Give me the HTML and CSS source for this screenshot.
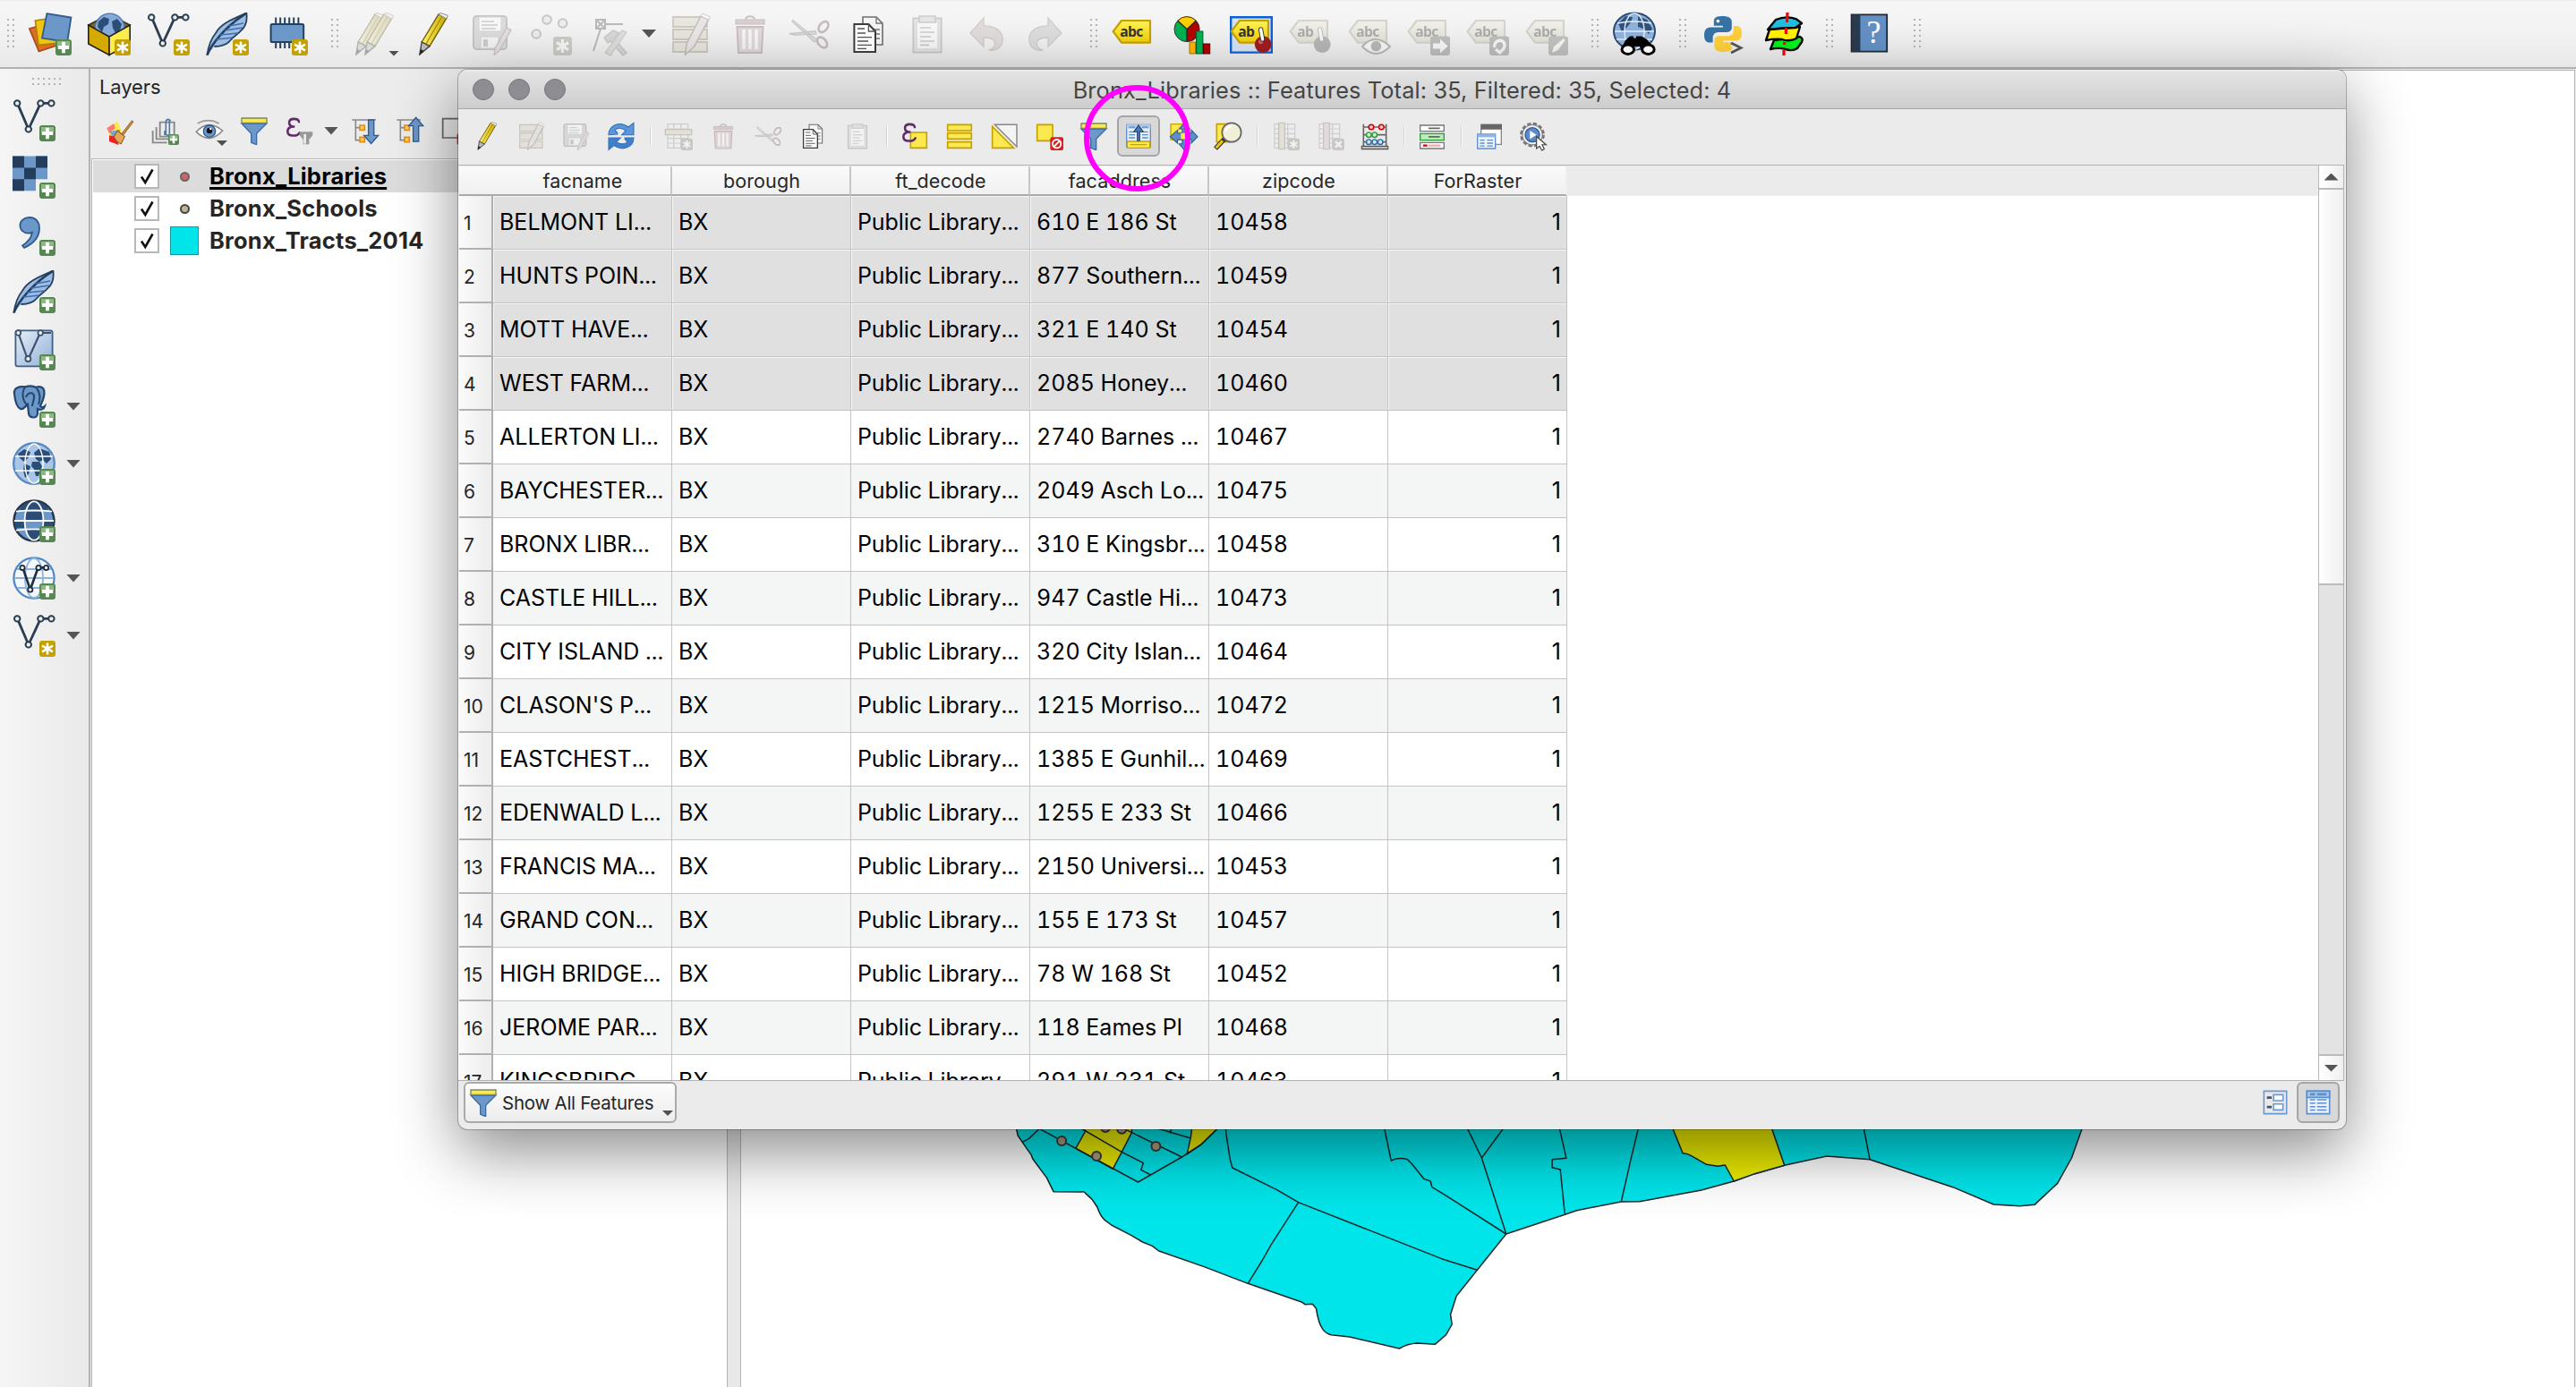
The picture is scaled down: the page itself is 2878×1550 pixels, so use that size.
FILE: index.html
```html
<!DOCTYPE html>
<html lang="en">
<head>
<meta charset="utf-8">
<title>Bronx_Libraries :: Features Total: 35, Filtered: 35, Selected: 4</title>
<link rel="stylesheet" href="styles.css">
</head>
<body>
<svg class="defs" width="0" height="0" aria-hidden="true">
<defs>
<linearGradient id="pen" x1="0" x2="1"><stop offset="0" stop-color="#fff36b"/><stop offset="1" stop-color="#c9a800"/></linearGradient>
<linearGradient id="blueg" x1="0" y1="0" x2="1" y2="1"><stop offset="0" stop-color="#e8eef6"/><stop offset="1" stop-color="#8fb0d8"/></linearGradient>
<linearGradient id="tag" x1="0" y1="0" x2="0" y2="1"><stop offset="0" stop-color="#fff35a"/><stop offset="1" stop-color="#f0cf00"/></linearGradient>
<symbol id="plus" viewBox="0 0 24 24"><rect x="15" y="15" width="9" height="9" rx="1.5" fill="#56894f"/><path d="M16 16h7v3.2h-7z" fill="#8fb78a"/><path d="M19.5 16.4v6.2M16.4 19.5h6.2" stroke="#fff" stroke-width="1.9"/></symbol>
<symbol id="star" viewBox="0 0 24 24"><rect x="15" y="15" width="9" height="9" rx="1.5" fill="#c4a000"/><path d="M19.5 16.2v6.6M16.5 17.8l6 3.4M22.5 17.8l-6 3.4" stroke="#fff" stroke-width="1.3"/></symbol>
<symbol id="vec" viewBox="0 0 24 24"><path d="M3.2 3.8 8.4 16M9.5 16 15.1 3.9M17 2.7h3.4" stroke="#2b3d50" stroke-width="1.4" fill="none"/><g fill="#eef0ea" stroke="#2b3d50"><circle cx="2.6" cy="2.7" r="1.6"/><circle cx="15.7" cy="2.7" r="1.6"/><circle cx="21.7" cy="2.7" r="1.6"/><circle cx="8.9" cy="17.2" r="1.6"/></g></symbol>
<symbol id="feather" viewBox="0 0 24 24"><path d="M.7 23.8C1.5 18 3 14.500 5.500 11.500 8 6.500 14 4 22.700.3c.6 5-.6 7.700-3 9.700-2 2.500-4.500 3.500-6 5.500-1.500 2-5 3.500-9 3.500" fill="#9dbde6" stroke="#24405f" stroke-width=".9"/><path d="M.7 23.800C3 18 11 7.500 22.700.300" stroke="#24405f" stroke-width="1.300" fill="none"/><path d="M8 12.500l10-1M6 15l9-1M10.500 10l10-1.500M13 7.500l8-1.500" stroke="#3f6ea8" stroke-width=".7"/></symbol>
<symbol id="pencil" viewBox="0 0 24 24"><path d="M3.600 16.500 13 1l4.500 2L8 18.800z" fill="url(#pen)" stroke="#6d5d10" stroke-width=".7"/><path d="M6 17.500 15 2" stroke="#a68a00" stroke-width=".6"/><path d="M3.600 16.500 2.400 23.500 8 18.800z" fill="#b9b9b9" stroke="#444" stroke-width=".7"/><path d="m2.400 23.500.6-3 1.800 1z" fill="#222"/><path d="m13 1 1-.8 4.200 1.500-.7 1.800z" fill="#f3f3f3" stroke="#888" stroke-width=".5"/></symbol>
<symbol id="save" viewBox="0 0 24 24"><rect x="1.500" y="2" width="18.500" height="18.500" rx="1.800" fill="#b0b4b8" stroke="#777" stroke-width="1"/><path d="M4.500 2.500h12.500v8h-12.500z" fill="#fff" stroke="#999" stroke-width=".5"/><path d="M6 5h7M6 7h9M6 9h8" stroke="#888" stroke-width=".7"/><path d="M5.500 13.500h10v6.500h-10z" fill="#f5f5f5" stroke="#999" stroke-width=".5"/><path d="M7 15h2.500v4H7z" fill="#888"/><path d="M13.500 20 20 8.500l2.500 1.300-6.500 11.500-3 2.500z" fill="#d9b9b0" stroke="#867" stroke-width=".6"/></symbol>
<symbol id="rows" viewBox="0 0 24 24"><g fill="#d9cf9c" stroke="#8d8350" stroke-width=".9"><path d="M2 2.500h19v5.500H2zM2 9.500h19v5.500H2zM2 16.500h19v5.500H2z"/></g><path d="M9.500 17.500 17.500 2l4.300 2-8 15-5 4.500z" fill="#e2cdc6" stroke="#766" stroke-width=".8"/><path d="m17.500 2 1-1.500 4.300 2-1 1.500z" fill="#fff" stroke="#888" stroke-width=".5"/></symbol>
<symbol id="trash" viewBox="0 0 24 24"><path d="M4.700 8h14.600l-.8 14.500h-13z" fill="#d9a5aa" stroke="#a35a62" stroke-width=".9"/><path d="M4 4h16v2.500H4z" fill="#c98a90" stroke="#a35a62" stroke-width=".6"/><path d="M9.500 3.800c.5-2.200 4.500-2.200 5 0" fill="none" stroke="#a35a62"/><path d="M8.500 9.500v11M12 9.500v11M15.500 9.500v11" stroke="#fff" stroke-width="1.700"/></symbol>
<symbol id="cut" viewBox="0 0 24 24"><path d="M1 11.800 15.500 10.300 16 12 4 12.600zM3 4.300 16.500 15.500 15 16.500 2.500 5z" fill="#bbb" stroke="#777" stroke-width=".6"/><ellipse cx="20" cy="8" rx="3.400" ry="2.200" transform="rotate(-50 20 8)" fill="none" stroke="#8a5a5a" stroke-width="1.300"/><ellipse cx="19.300" cy="16.700" rx="3.400" ry="2.200" transform="rotate(50 19.300 16.700)" fill="none" stroke="#8a5a5a" stroke-width="1.300"/></symbol>
<symbol id="copy" viewBox="0 0 24 24"><path d="M9 2.500h7.500L20 6v12H9z" fill="#f4f4f4" stroke="#6e6e6e" stroke-width=".8"/><path d="M16.500 2.500V6H20M15.500 9.500h3M15.500 12h3M15.500 14.500h3" fill="none" stroke="#777" stroke-width=".7"/><path d="M4.200 6.500h8l3.800 4V22H4.200z" fill="#fff" stroke="#3c3c3c" stroke-width="1"/><path d="M12.200 6.500v4H16M6 9h4M6 11.500h4.500M6 13.800h8M6 16h6M6 18.200h8M6 20.200h5" fill="none" stroke="#555" stroke-width=".7"/></symbol>
<symbol id="paste" viewBox="0 0 24 24"><path d="M4.200 3.300h15.600v19H4.200z" fill="#d8d5ca" stroke="#8b8470"/><path d="M6 5h12v15.500H6z" fill="#fff" stroke="#999" stroke-width=".5"/><path d="M7.500 2h9v3.500h-9z" fill="#ccc" stroke="#888" stroke-width=".8"/><path d="M8 8.500h6M8 11h8M8 13.500h6M8 16h8M8 18.200h5" stroke="#888" stroke-width=".8"/></symbol>
<symbol id="undo" viewBox="0 0 24 24"><path d="M3 11.500 10.500 3v4.500c8 0 11 4 10.500 8.500-.5 4-4 5.500-7.500 5 3-1 4-3 3-5-.8-1.500-3-2-6-2v5z" fill="#c9b3a8" stroke="#a98a7c" stroke-width=".7"/></symbol>
<symbol id="funnel" viewBox="0 0 24 24"><path d="M1.500 6 9.500 14.500v7.500l4.500 1.800V14.500L22.500 6z" fill="#6b97c9" stroke="#3a6ba5" stroke-width="1"/><path d="M1.500 1.500h21v4h-21z" fill="#fce94f" stroke="#7a8a50" stroke-width="1"/></symbol>
<symbol id="eps" viewBox="0 0 24 24"><path d="M12 4.600C11.500 1.500 4 1 3.800 5.200 3.800 8 6 8.700 8.500 8.700 4.500 8.500 2.300 10 2.500 13c.3 4 8 4.200 10 .7" fill="none" stroke="#5e2d68" stroke-width="1.900" stroke-linecap="round"/></symbol>
<symbol id="tagabc" viewBox="0 0 24 24"><path d="M.8 10.600 5.500 4.500h16v12.300h-16z" fill="url(#tag)" stroke="#c4a000" stroke-width="1.100" stroke-linejoin="round"/></symbol>
<symbol id="sheet" viewBox="0 0 24 24"><path d="M3 2h17v20H3z" fill="#eef2f7" stroke="#999" stroke-width=".9"/><path d="M3 6h17M8 2v20M14 2v20M3 10h17M3 14h17M3 18h17" stroke="#999" stroke-width=".9"/></symbol>
<symbol id="globe" viewBox="0 0 24 24"><circle cx="12" cy="12" r="11.400" fill="#a9c6e8" stroke="#5a8ac2" stroke-width="1.200"/><path d="M3 6.500 6.500 4 10 5.500 9 8.500 6.500 11 4 9zM6.500 12l3.500 1.500L9 18l-2 2-1-4zM12 6l3-2.500 5.500 2 1 4-2.500 2.500-2-2-2 1-2-1.500zM11 11h4l1.500 2.500-2 5.500H13l-1-4-1.500-1.500z" fill="#2c4d75"/><ellipse cx="12" cy="12" rx="5" ry="11" fill="none" stroke="#fff" stroke-width=".7"/><path d="M1.500 8h21M1.500 16h21" stroke="#fff" stroke-width=".7"/></symbol>
</defs>
</svg>

<header class="main-toolbar">
  <div class="group first">
    <i class="grip"></i>
    <svg class="icon" viewBox="0 0 24 24"><path d="M.4 9 11 6l4.500 12.500-9.800 3.200z" fill="#dd6c2a" stroke="#a54a15" stroke-width=".8"/><path d="M3.700 4.500 14 3l3 14-11.500 1.200z" fill="#f2c40f" stroke="#a98200" stroke-width=".8"/><path d="M10.200.600 23.700 2.800 21.600 16.500 7.500 14.300z" fill="#6b97c9" stroke="#2f5a8c" stroke-width=".9"/><use href="#plus"/></svg>
    <svg class="icon" viewBox="0 0 24 24"><path d="M.4 7 12 1l11.600 6L12 14z" fill="#7a6a10" stroke="#333" stroke-width=".8"/><circle cx="12.300" cy="8.800" r="8.200" fill="#86abdb" stroke="#4a77ad" stroke-width=".6"/><path d="M6 5l3-2.500 3 1-.5 3-2.500 1.500L8 11 5.500 8zM13.500 5l3-1.500 2.500 3-1 3.500-2.500 1.500-1.500-3z" fill="#2c4d75"/><path d="M.4 7v10.500L12 23.700V13.500z" fill="#d4aa00" stroke="#222" stroke-width=".8"/><path d="M23.600 7v10.500L12 23.700V13.500z" fill="#fcee4f" stroke="#222" stroke-width=".8"/><use href="#star"/></svg>
    <svg class="icon" viewBox="0 0 24 24"><use href="#vec"/><use href="#star"/></svg>
    <svg class="icon" viewBox="0 0 24 24"><use href="#feather"/><use href="#star"/></svg>
    <svg class="icon" viewBox="0 0 24 24"><path d="M6.100 2.700v17.300M8.600 2.700v17.300M11.100 2.700v17.300M13.600 2.700v17.300M16.100 2.700v17.300M18.700 2.700v17.300" stroke="#24405f" stroke-width="1"/><rect x="3.300" y="6.500" width="18.300" height="10" rx=".8" fill="#6b97c9" stroke="#24405f"/><use href="#star"/></svg>
  </div>
  <div class="group edit">
    <i class="grip"></i>
    <span class="tool"><svg class="icon off" viewBox="0 0 24 24"><use href="#pencil" x="-.5"/><use href="#pencil" x="4.500"/></svg><i class="tiny-arrow"></i></span>
    <svg class="icon" viewBox="0 0 24 24"><use href="#pencil" x="2"/></svg>
    <svg class="icon off" viewBox="0 0 24 24"><use href="#save"/></svg>
    <svg class="icon off" viewBox="0 0 24 24"><g fill="#dfe5dc" stroke="#777"><circle cx="9.500" cy="4" r="2.400"/><circle cx="18.300" cy="6" r="2.400"/><circle cx="3.600" cy="12" r="2.400"/></g><rect x="13" y="13.500" width="10.500" height="10.500" rx="1.500" fill="#8f8a6c"/><path d="M18.200 15v7.500M15 16.800l6.500 4M21.500 16.800l-6.500 4" stroke="#fff" stroke-width="1.500"/></svg>
    <svg class="icon off" viewBox="0 0 24 24"><path d="M4 4h5v5H4zM4 4l5 5M9 4 4 9M9 6.500h10M6.500 9 2.500 21.500" fill="none" stroke="#555"/><path d="M8.500 14l5-4 3.500 1.500-3 3 7 8-2 1.500-7-8-1.500 1z" fill="#aaa" stroke="#777" stroke-width=".6"/><path d="M21 11l-9 13-3-1.500L18.500 10z" fill="#c2bda8" stroke="#888" stroke-width=".6"/></svg>
    <i class="arrow"></i>
    <svg class="icon off" viewBox="0 0 24 24"><use href="#rows"/></svg>
    <svg class="icon off" viewBox="0 0 24 24"><use href="#trash"/></svg>
    <svg class="icon off" viewBox="0 0 24 24"><use href="#cut"/></svg>
    <svg class="icon" viewBox="0 0 24 24"><use href="#copy"/></svg>
    <svg class="icon off" viewBox="0 0 24 24"><use href="#paste"/></svg>
    <svg class="icon off" viewBox="0 0 24 24"><use href="#undo"/></svg>
    <svg class="icon off flip" viewBox="0 0 24 24"><use href="#undo"/></svg>
  </div>
  <div class="group labels">
    <i class="grip"></i>
    <svg class="icon" viewBox="0 0 24 24"><use href="#tagabc"/><text class="tag-text" x="4.600" y="13.400">abc</text></svg>
    <svg class="icon" viewBox="0 0 24 24"><circle cx="9" cy="9.300" r="7" fill="#00b050"/><path d="M9 9.300 3.800 4.500A7 7 0 0 1 14.200 4.500z" fill="#ffcc00"/><path d="M9 9.300 14.200 4.500A7 7 0 0 1 9 16.300z" fill="#b30000"/><path d="M9 16.300V9.300L3.800 4.500M9 9.300l5.200-4.800" stroke="#222" stroke-width=".6" fill="none"/><circle cx="9" cy="9.300" r="7" fill="none" stroke="#333" stroke-width=".5"/><path d="M10.500 16.500h3.300V23h-3.300z" fill="#ffb400" stroke="#a70" stroke-width=".5"/><path d="M14.300 10.500h3.600V23h-3.600z" fill="#00b050" stroke="#063" stroke-width=".6"/><path d="M18.300 17.500h3.500V23h-3.500z" fill="#b30000" stroke="#500" stroke-width=".6"/></svg>
    <svg class="icon" viewBox="0 0 24 24"><path d="M.6 2.600h22.800v19.700H.6z" fill="#d5e2f3" stroke="#0b61d8" stroke-width="1.200"/><use href="#tagabc"/><text class="tag-text" x="4.600" y="13.400">ab</text><circle cx="18.600" cy="17.800" r="4.700" fill="#9f1d1d"/><circle cx="17.300" cy="16.300" r="1.300" fill="#d06060"/><path d="M17.300 9.500l1 5.500" stroke="#333" stroke-width="2.600" stroke-linecap="round"/><path d="M17.300 9.500l1 5.500" stroke="#fff" stroke-width="1.700" stroke-linecap="round"/></svg>
    <svg class="icon off gray" viewBox="0 0 24 24"><use href="#tagabc"/><text class="tag-text" x="4.600" y="13.400">ab</text><circle cx="18.600" cy="17.800" r="4.700" fill="#744"/><path d="M17.300 9.500l1 5.500" stroke="#555" stroke-width="2.600" stroke-linecap="round"/><path d="M17.300 9.500l1 5.500" stroke="#fff" stroke-width="1.700" stroke-linecap="round"/></svg>
    <svg class="icon off gray" viewBox="0 0 24 24"><use href="#tagabc"/><text class="tag-text" x="4.600" y="13.400">abc</text><path d="M8 19q7-8 15.500 0-8 8-15.500 0z" fill="#fff" stroke="#555"/><circle cx="15.700" cy="18.800" r="2.900" fill="#555"/></svg>
    <svg class="icon off gray" viewBox="0 0 24 24"><use href="#tagabc"/><text class="tag-text" x="4.600" y="13.400">abc</text><rect x="13" y="13.300" width="11" height="10.700" rx="1.500" fill="#666"/><path d="M14.500 17.300h4v-2.500l4.300 4-4.300 4v-2.500h-4z" fill="#fff"/></svg>
    <svg class="icon off gray" viewBox="0 0 24 24"><use href="#tagabc"/><text class="tag-text" x="4.600" y="13.400">abc</text><rect x="13" y="13.300" width="11" height="10.700" rx="1.500" fill="#666"/><path d="M16 19.500c-1-4 5-5.500 5.500-1.500.2 2-1 3-2.500 4M16.500 20.500l3 2.500" fill="none" stroke="#fff" stroke-width="1.700"/></svg>
    <svg class="icon off gray" viewBox="0 0 24 24"><use href="#tagabc"/><text class="tag-text" x="4.600" y="13.400">abc</text><rect x="13" y="13.300" width="11" height="10.700" rx="1.500" fill="#777055"/><path d="M15 22.500l1-3.500 5.500-4.500.8 1-4 5.500z" fill="#fff"/></svg>
  </div>
  <div class="group">
    <i class="grip"></i>
    <svg class="icon" viewBox="0 0 24 24"><ellipse cx="12" cy="10.500" rx="11.500" ry="10.300" fill="#8fb2dc" stroke="#2b4a72"/><path d="M3 6l4-4 4 .5-1 3L8 8l-3 3zM14 2l5 2 3 5-2 3-3-3-3-1z" fill="#2f527e"/><ellipse cx="12" cy="10.500" rx="5.500" ry="10" fill="none" stroke="#e4eefa" stroke-width=".7"/><path d="M2.500 6q9.500-2 19 0M1 10.500h22M2 15h20" stroke="#e4eefa" stroke-width=".7" fill="none"/><path d="M9.500 13.200h2v1h1.500v-1h3l3 1.800 4.500 5.500-7 2-1.500-3.500h-4l-1 3-5.500-1.500 2.500-5z" fill="#000"/><g fill="#fff" stroke="#000" stroke-width="1.500"><ellipse cx="8.400" cy="20.600" rx="3.400" ry="2.600"/><ellipse cx="19.700" cy="20.600" rx="3.400" ry="2.600"/></g></svg>
  </div>
  <div class="group">
    <i class="grip"></i>
    <svg class="icon" viewBox="0 0 24 24"><path d="M12 2c-4.500 0-4.600 1.800-4.600 3.200v2.200h5v.8H5.500C3 8.200 2 10 2 12.700s1.200 4 3 4h1.800v-2.500c0-1.800 1.200-3.200 3.200-3.200h4.800c1.700 0 2.600-1.300 2.600-2.600V5.200C17.400 3 15.500 2 12 2z" fill="#3673a5"/><circle cx="9.700" cy="4.800" r=".9" fill="#fff"/><path d="M13 22c4.500 0 4.600-1.800 4.600-3.200v-2.200h-5v-.8h6.900c2.500 0 3.500-1.600 3.500-4.300s-1.200-4-3-4h-1.700v2.600c0 1.800-1.200 3-3.200 3h-4.800c-1.700 0-2.600 1.300-2.600 2.600v3C7.700 21 9.500 22 13 22z" fill="#fdcf3c"/><path d="M17.500 17.500l4.500 3-4.500 3" fill="none" stroke="#eee" stroke-width="2.600"/><path d="M17 17l5.500 2.800-5.500 2.700" fill="none" stroke="#555" stroke-width="1.400"/></svg>
    <svg class="icon" viewBox="0 0 24 24"><g stroke="#000" stroke-width="1.200" stroke-linejoin="round"><path d="M8 15.500 22.500 13.500q2 1 1 3l-2.500 3.500q-3 2-7 .3-4-.8-8 .2z" fill="#00f01c"/><path d="M5.500 9.500 22.500 8 20.500 14.500q-4 2-8 .5-4-.5-9 .5z" fill="#fff200"/><path d="M9 4q6-2.500 11.500-.3L23.500 6 20 8.500q-7 0-15.500 1z" fill="#22bde0"/></g><path d="M15.500 0l-.3 5.500M14.700 8.500v3.500M13.800 16.500v1.500M13.500 21v3" stroke="#f00" stroke-width="1.600"/></svg>
  </div>
  <div class="group">
    <i class="grip"></i>
    <svg class="icon" viewBox="0 0 24 24"><path d="M2.300 1.200h19.800v20.600H2.300z" fill="#6390c4" stroke="#23262f" stroke-width=".9"/><path d="M2.500 1.200h4.700v20.600h-4.700z" fill="#2a3b4f"/><text class="help-text" x="14.700" y="17">?</text></svg>
  </div>
  <div class="group last"><i class="grip"></i></div>
</header>

<main class="workspace">
  <nav class="source-toolbar">
    <i class="grip wide"></i>
    <div class="source"><svg class="icon" viewBox="0 0 24 24"><use href="#vec"/><use href="#plus"/></svg></div>
    <div class="source"><svg class="icon" viewBox="0 0 24 24"><path d="M0 .2h19.500v12.900H13v6.500H0z" fill="#6b97c9"/><path d="M0 .200h6.500v6.500H0zM13 .200h6.500v6.500H13zM6.500 6.700H13v6.400H6.500zM0 13.100h6.500v6.500H0z" fill="#243d5c"/><use href="#plus"/></svg></div>
    <div class="source"><svg class="icon" viewBox="0 0 24 24"><path d="M9.500 2.500c-3.200 0-5.300 2-5.300 4.400 0 2.600 2 4.400 4.600 4.400.8 0 1.500-.1 2.200-.4-.5 3-2.500 5.300-5.500 7.300l1 1.300C12 17 15 13 15 8.500c0-3.500-2-6-5.500-6z" fill="#6b97c9" stroke="#2f5a8c" stroke-width=".9"/><use href="#plus"/></svg></div>
    <div class="source"><svg class="icon" viewBox="0 0 24 24"><use href="#feather"/><use href="#plus"/></svg></div>
    <div class="source"><svg class="icon" viewBox="0 0 24 24"><rect x="1.700" y="1.700" width="20.600" height="20" rx="1.200" fill="url(#blueg)" stroke="#3f5f88" stroke-width=".9"/><path d="M3.500 4 8 16.500M9.300 16.500 15 4M17 3h4.500" stroke="#3f5270" stroke-width="1.100" fill="none"/><g fill="#eef0ea" stroke="#3f5270" stroke-width=".9"><circle cx="3.200" cy="3" r="1.400"/><circle cx="15.600" cy="3" r="1.400"/><circle cx="8.700" cy="17.500" r="1.500"/></g><use href="#plus"/></svg></div>
    <div class="source"><svg class="icon" viewBox="0 0 24 24"><path d="M1 5C.5 1.500 4 .7 7 1.200 10 .2 12 .8 13 1.500c3-1.200 5.500 0 4.500 5-.5 2.500-1.500 4-2 5.500 1 .8 2 .5 2.500 0-.5 2-2.500 2.200-4 1.500v2.500c0 3-4.500 3-5 0l-.5-5c-2 1.500-2.500 3-4 2.500C2 12.500 1.300 8 1 5z" fill="#6b97c9" stroke="#24466f" stroke-width="1.100"/><path d="M7 1.500C5 4 5.500 9 8 11M7.500 7c1-3 4-3 4.500-1 .3 3-1 4-1 6M13.500 2c2.500 3 2 6 1 9" fill="none" stroke="#24466f"/><use href="#plus"/></svg><i class="arrow"></i></div>
    <div class="source"><svg class="icon" viewBox="0 0 24 24"><use href="#globe"/><use href="#plus"/></svg><i class="arrow"></i></div>
    <div class="source"><svg class="icon" viewBox="0 0 24 24"><circle cx="12" cy="12" r="11.200" fill="#6b97c9" stroke="#26374b" stroke-width="1.300"/><path d="M4.500 4.500Q7 1.500 12 1q5 .5 7.500 3.500L20 6H4zM1 12h6v4H1.800zM23 12h-6v4h5.200zM7 7h10v4.500H7zM8 17h8l-1 5q-3 2-6 0z" fill="#2c4d75"/><ellipse cx="12" cy="12" rx="5.200" ry="10.800" fill="none" stroke="#fff" stroke-width=".9"/><path d="M2 6.800q10-1.200 20 0M1 12h22M2 17.300q10-1.200 20 0" stroke="#fff" stroke-width=".9" fill="none"/><use href="#plus"/></svg></div>
    <div class="source"><svg class="icon" viewBox="0 0 24 24"><circle cx="12" cy="12" r="11.300" fill="#f4f7fb" stroke="#4f86c6" stroke-width="1.100"/><ellipse cx="12" cy="12" rx="5" ry="11" fill="none" stroke="#8fb2dc" stroke-width=".9"/><path d="M1 12h22M2.500 7h19M2.500 17.500h19" stroke="#8fb2dc" stroke-width=".9"/><path d="M6 7l3.400 10M10.400 17 14 7M15.500 6.200h2.200" stroke="#1f2d3d" stroke-width="1.300"/><g fill="#fff" stroke="#1f2d3d" stroke-width=".9"><circle cx="5.500" cy="6.200" r="1.300"/><circle cx="14.500" cy="6.200" r="1.300"/><circle cx="18.800" cy="6.200" r="1.300"/><circle cx="9.900" cy="18.500" r="1.300"/></g><use href="#plus"/></svg><i class="arrow"></i></div>
    <div class="source"><svg class="icon" viewBox="0 0 24 24"><use href="#vec"/><use href="#star"/></svg><i class="arrow"></i></div>
  </nav>

  <section class="layers-panel">
    <h2 class="panel-title">Layers</h2>
    <div class="panel-tools">
      <svg class="icon-s" viewBox="0 0 24 24"><path d="M1 10l9-6 4 10-8 9z" fill="#fce94f"/><path d="M1 10l6-4 1 4-5 4z" fill="#f77"/><path d="M3 13l9-2-1 4-5 2z" fill="#6fa8dc"/><path d="M3 16l6 1 2 7-8-3z" fill="#e22"/><path d="M10 12l6 5-3 6q-4-1-6-6z" fill="#e3a857" stroke="#8a5a1c" stroke-width=".8"/><path d="M13.500 14.500 22 3.500l1.300 1-8.300 11z" fill="#c98a3a" stroke="#8a5a1c" stroke-width=".6"/></svg>
      <svg class="icon-s" viewBox="0 0 24 24"><path d="M2 12v10h12M5 9v10h10M8 5h12v12H8z" fill="none" stroke="#888" stroke-width="1.400"/><path d="M12 12v4M16 3v12q-1 2-3 0V4q1.500-3 4 0" fill="none" stroke="#4a77ad" stroke-width="1.200"/><use href="#plus"/></svg>
      <span class="tool"><svg class="icon-s" viewBox="0 0 24 24"><path d="M1 13Q11 2 23 12 12 24 1 13z" fill="#fff" stroke="#888" stroke-width="1.200"/><path d="M2 6q9-5 18 0" fill="none" stroke="#999" stroke-width="1.200"/><circle cx="12" cy="12.500" r="5" fill="#6b97c9" stroke="#2f5a8c"/><circle cx="12" cy="12" r="2.400" fill="#111"/><circle cx="13" cy="10.500" r=".9" fill="#fff"/></svg><i class="tiny-arrow"></i></span>
      <svg class="icon-s" viewBox="0 0 24 24"><use href="#funnel"/></svg>
      <svg class="icon-s" viewBox="0 0 24 24"><use href="#eps"/><path d="M12.500 13h11v3l-3 3.500v4h-5v-4l-3-3.500z" fill="#999"/><path d="M17 15v8" stroke="#eee" stroke-width="2"/></svg>
      <i class="arrow"></i>
      <svg class="icon-s" viewBox="0 0 24 24"><path d="M1 3h20M4 3v17h4M4 9.500h4" fill="none" stroke="#888" stroke-width="1.200"/><path d="M7.500 7.500h4v4h-4zM7.500 17.500h4v4h-4z" fill="#fdd06a" stroke="#ef8d00" stroke-width="1.300"/><path d="M14.700 3h4.600v13H23l-6 6.800L11 16h3.700z" fill="#6b97c9" stroke="#2f5a8c"/></svg>
      <svg class="icon-s" viewBox="0 0 24 24"><path d="M1 3h20M4 3v17h4M4 9.500h4" fill="none" stroke="#888" stroke-width="1.200"/><path d="M7.500 7.500h4v4h-4zM7.500 17.500h4v4h-4z" fill="#fdd06a" stroke="#ef8d00" stroke-width="1.300"/><path d="M14.700 21h4.600V8H23l-6-7L11 8h3.700z" fill="#6b97c9" stroke="#2f5a8c"/></svg>
      <svg class="icon-s" viewBox="0 0 24 24"><path d="M2 2h18v16H2z" fill="#e8e8e8" stroke="#666" stroke-width="1.300"/><rect x="14" y="14" width="10" height="10" rx="2" fill="#d22"/></svg>
    </div>
    <ul class="tree">
      <li class="layer current"><span class="check"><svg viewBox="0 0 24 24"><path d="M6 12.500 10.300 19 18.500 4.500" fill="none" stroke="#111" stroke-width="2.600"/></svg></span><span class="swatch"><i class="dot red"></i></span><span class="name">Bronx_Libraries</span></li>
      <li class="layer"><span class="check"><svg viewBox="0 0 24 24"><path d="M6 12.500 10.300 19 18.500 4.500" fill="none" stroke="#111" stroke-width="2.600"/></svg></span><span class="swatch"><i class="dot tan"></i></span><span class="name">Bronx_Schools</span></li>
      <li class="layer"><span class="check"><svg viewBox="0 0 24 24"><path d="M6 12.500 10.300 19 18.500 4.500" fill="none" stroke="#111" stroke-width="2.600"/></svg></span><span class="swatch"><i class="fill"></i></span><span class="name">Bronx_Tracts_2014</span></li>
    </ul>
  </section>

  <div class="splitter"></div>

  <section class="map-canvas">
    <svg class="map" viewBox="0 0 1568 1110" preserveAspectRatio="none">
      <path class="tract" d="M67 200V247L69 270 75 292 87 335 89 348 108 412 117 458 155 459Q158 457 160 463L169 484 176 510Q180 540 186 553L195 570 222 605 237 627 250 640 259 657 320 710 379 766 452 829 456 836 466 835 471 850Q474 900 480 920 484 934 491 938L516 945 583 984Q594 968 607 966L631 970 638 955 646 938 654 903 652 870 660 808 688 721 727 600 808 533 822 521 882 492 907 491 990 453 1034 423 1062 398 1102 370 1159 339 1217 350 1329 443 1384 501 1419 506 1439 502 1470 430 1489 345 1503 247V200z"/>
      <path class="selected" d="M150 200 160 255 147 313 197 382 209 325 222 262 226 200z"/>
      <path class="selected" d="M306 200 302 275 297 332 316 300 338 247 345 200z"/>
      <path class="selected" d="M950 200 952 250 965 329Q972 330 976 337L997 367 1012 373 1022 369 1034 423 1062 398 1102 370 1085 247V200z"/>
      <path class="edge" d="M75 292 84 280 98 247 231 426 290 342 316 300 338 247M150 240 209 325 238 362 235 385 248 402M212 247 290 342M258 247 302 279M276 247 274 262M347 200 350 270 355 350 358 378 418 452 447 494 640 683 688 721M447 494 410 637 398 690 379 766M563 247 572 354Q582 342 594 350L600 365 616 415 625 423 627 443 645 470 727 600M675 247 694 345 727 600M694 345 723 247M799 247 808 346 789 350 789 377 800 384 806 533M905 247 895 350 882 492M1209 247 1217 350"/>
      <g class="school"><ellipse cx="128" cy="288" rx="6" ry="15"/><ellipse cx="175" cy="339" rx="6" ry="15"/><ellipse cx="255" cy="306" rx="6" ry="15"/><ellipse cx="187" cy="243" rx="6" ry="15"/><ellipse cx="209" cy="248" rx="6" ry="15"/></g>
    </svg>
  </section>
</main>

<div class="window">
  <div class="titlebar"><div class="lights"><i></i><i></i><i></i></div><h1>Bronx_Libraries :: Features Total: 35, Filtered: 35, Selected: 4</h1></div>
  <div class="table-tools">
    <svg class="icon-s" viewBox="0 0 24 24"><use href="#pencil" x="2"/></svg>
    <svg class="icon-s off" viewBox="0 0 24 24"><use href="#rows"/></svg>
    <svg class="icon-s off" viewBox="0 0 24 24"><use href="#save"/></svg>
    <svg class="icon-s" viewBox="0 0 24 24"><path d="M1.500 11C1.500 3 11 -1 18 4.500L22.500 1v10h-10l3.500-3.500C12 4.500 8 5 6.500 7.500 8 8 9 9 9 10.500z" fill="#5b96d8" stroke="#3470b5" stroke-width=".8"/><path d="M22.500 13.500c0 8-9.500 11.500-16.500 6.500L1.500 23.500v-10h10L8 17c4 2.500 8 2 9.500-.5-1.500-.5-2.500-1.500-2.500-3z" fill="#3f7fcb" stroke="#3470b5" stroke-width=".8"/></svg>
    <i class="sep"></i>
    <svg class="icon-s off" viewBox="0 0 24 24"><use href="#sheet"/><path d="M1 6.500h22v4.500H1z" fill="#d9cf9c" stroke="#8d8350"/><rect x="14" y="14" width="10" height="10" rx="1.500" fill="#8f8a6c"/><path d="M19 15.500v7M16 17.200l6 3.600M22 17.200l-6 3.600" stroke="#fff" stroke-width="1.400"/></svg>
    <svg class="icon-s off" viewBox="0 0 24 24"><use href="#trash"/></svg>
    <svg class="icon-s off" viewBox="0 0 24 24"><use href="#cut"/></svg>
    <svg class="icon-s" viewBox="0 0 24 24"><use href="#copy"/></svg>
    <svg class="icon-s off" viewBox="0 0 24 24"><use href="#paste"/></svg>
    <i class="sep"></i>
    <svg class="icon-s" viewBox="0 0 24 24"><path d="M8.500 9h13.500v13H8.500z" fill="#fce94f" stroke="#c4a000" stroke-width="1.200"/><use href="#eps"/></svg>
    <svg class="icon-s" viewBox="0 0 24 24"><path d="M2 2.500h20v5H2zM2 9.500h20v5H2zM2 17h20v5H2z" fill="#fce94f" stroke="#c4a000" stroke-width="1.200"/></svg>
    <svg class="icon-s" viewBox="0 0 24 24"><path d="M4 2.500h18.500V21z" fill="#f4f4f4" stroke="#888" stroke-width="1.100"/><path d="M2 4v18h18z" fill="#fce94f" stroke="#c4a000" stroke-width="1.200"/></svg>
    <svg class="icon-s" viewBox="0 0 24 24"><path d="M2 2.500h13V16H2z" fill="#fce94f" stroke="#c4a000" stroke-width="1.200"/><rect x="13" y="13" width="11" height="11" rx="1.500" fill="#d9201f"/><circle cx="18.500" cy="18.500" r="3.500" fill="none" stroke="#fff" stroke-width="1.400"/><path d="M21 16l-5 5" stroke="#fff" stroke-width="1.400"/></svg>
    <svg class="icon-s" viewBox="0 0 24 24"><use href="#funnel"/></svg>
    <span class="pressed"><svg class="icon-s" viewBox="0 0 24 24"><path d="M2 2.500h20V21H2z" fill="#e6eef8" stroke="#5b8fd0"/><path d="M2 2.500h20V6H2z" fill="#b7d0ee"/><path d="M4 8.500h5M4 11h5M4 13.500h5M15 8.500h5M15 11h5M15 13.500h5M4 4.500h5M15 4.500h5" stroke="#5b8fd0"/><path d="M2.500 16.500h19V22h-19z" fill="#fce94f" stroke="#c4a000"/><path d="M5 19.200h14" stroke="#c4a000"/><path d="M11 16V8.500H8L12 3l4 5.500h-3V16z" fill="#4a78b3" stroke="#24466f" stroke-width=".8"/></svg></span>
    <svg class="icon-s" viewBox="0 0 24 24"><path d="M1.500 2h12.500v13H1.500z" fill="#fce94f" stroke="#c4a000"/><path d="M13 1l4.500 5h-2.700v3.500h4V7L24 12.500 18.800 18v-3h-4v3.500h2.700L13 24l-4.500-5.500h2.700V15h-4v3L1 12.500 7.200 7v2.500h4V6H8.500z" fill="#5f8ec6" stroke="#2f5a8c" stroke-width=".8"/><path d="M10 9.500h6v5h-6z" fill="#fce94f"/></svg>
    <svg class="icon-s" viewBox="0 0 24 24"><path d="M2.500 2h11v15h-11z" fill="#fce94f" stroke="#c4a000" stroke-width="1.200"/><path d="M9.500 14 1.500 22.500" stroke="#333" stroke-width="4"/><path d="M7.500 16 2 22" stroke="#f2c40f" stroke-width="2.300"/><circle cx="15" cy="9" r="8" fill="#f1efd9" stroke="#666" stroke-width="1.300"/><path d="M10 8q1-4 5-4" fill="none" stroke="#fff" stroke-width="1.600"/></svg>
    <i class="sep"></i>
    <svg class="icon-s off" viewBox="0 0 24 24"><use href="#sheet"/><path d="M6.500 1h5v22h-5z" fill="#d9cf9c" stroke="#8d8350"/><rect x="14" y="14" width="10" height="10" rx="1.500" fill="#8f8a6c"/><path d="M19 15.500v7M16 17.200l6 3.600M22 17.200l-6 3.600" stroke="#fff" stroke-width="1.400"/></svg>
    <svg class="icon-s off" viewBox="0 0 24 24"><use href="#sheet"/><path d="M6.500 1h5v22h-5z" fill="#e3b9bc" stroke="#a77"/><rect x="14" y="14" width="10" height="10" rx="1.500" fill="#a88"/><path d="M16.500 16.500l5 5M21.500 16.500l-5 5" stroke="#fff" stroke-width="1.800"/></svg>
    <svg class="icon-s" viewBox="0 0 24 24"><path d="M2.500 2v20M21.500 2v20M3 4.500h18M3 11h18M3 17h18" stroke="#666" stroke-width="1.200"/><path d="M1 20.500h22V23H1z" fill="#bbb" stroke="#555" stroke-width=".9"/><g stroke-width="1.100"><g fill="#f7c4c4" stroke="#c00"><circle cx="9" cy="4.500" r="2.100"/><circle cx="17.500" cy="4.500" r="2.100"/></g><g fill="#c9f0c9" stroke="#2f9a3c"><circle cx="7" cy="11" r="2.100"/><circle cx="11.800" cy="11" r="2.100"/></g><g fill="#cfe4f5" stroke="#2f6ea5"><circle cx="7" cy="17" r="2.100"/><circle cx="11.800" cy="17" r="2.100"/><circle cx="16.600" cy="17" r="2.100"/></g></g></svg>
    <i class="sep"></i>
    <svg class="icon-s" viewBox="0 0 24 24"><path d="M2 3h20v5H2zM2 17.500h20v5H2z" fill="#fff" stroke="#777"/><path d="M2 10h20v5.500H2z" fill="#b5efb5" stroke="#2f9a3c"/><path d="M9 5.500h9.500M9 12.700h9.500" stroke="#666" stroke-width="1.300"/><path d="M9 20h10" stroke="#f4a6a6" stroke-width="1.800"/><path d="M4.500 20H8" stroke="#c00" stroke-width="1.800"/></svg>
    <i class="sep"></i>
    <svg class="icon-s" viewBox="0 0 24 24"><path d="M5 2.500h17V19H5z" fill="#fff" stroke="#888"/><path d="M5 2h17.500v4.500H5z" fill="#666"/><path d="M2 10.500h15V22.500H2z" fill="#eef4fb" stroke="#5b8fd0"/><path d="M2 10.500h15v2.500H2z" fill="#8fb5e2"/><path d="M4 15.500h4M4 18h4M4 20.300h4M10 15.500h5M10 18h5M10 20.300h5" stroke="#5b8fd0"/></svg>
    <svg class="icon-s" viewBox="0 0 24 24"><circle cx="10.500" cy="11" r="9.300" fill="#eee" stroke="#777" stroke-width="2.200" stroke-dasharray="3.200 1.700"/><circle cx="10.500" cy="11" r="8.400" fill="#eee" stroke="#777" stroke-width=".8"/><circle cx="10.500" cy="11" r="6" fill="#5b8cc8" stroke="#2f5a8c"/><path d="M8.500 7.500v7l5.500-3.500z" fill="#fff"/><path d="M14 12.500v10l2.500-2 2 3.500 2-1.200-1.800-3.500H22z" fill="#fff" stroke="#444" stroke-width=".9"/></svg>
  </div>
  <div class="table-area">
    <div class="table-view">
      <table>
        <colgroup><col class="num"><col><col><col><col><col><col></colgroup>
        <thead><tr><th class="corner"></th><th>facname</th><th>borough</th><th>ft_decode</th><th>facaddress</th><th>zipcode</th><th>ForRaster</th></tr></thead>
        <tbody>
        <tr class="sel"><th>1</th><td>BELMONT LI...</td><td>BX</td><td>Public Library...</td><td>610 E 186 St</td><td>10458</td><td>1</td></tr>
        <tr class="sel"><th>2</th><td>HUNTS POIN...</td><td>BX</td><td>Public Library...</td><td>877 Southern...</td><td>10459</td><td>1</td></tr>
        <tr class="sel"><th>3</th><td>MOTT HAVE...</td><td>BX</td><td>Public Library...</td><td>321 E 140 St</td><td>10454</td><td>1</td></tr>
        <tr class="sel"><th>4</th><td>WEST FARM...</td><td>BX</td><td>Public Library...</td><td>2085 Honey...</td><td>10460</td><td>1</td></tr>
        <tr><th>5</th><td>ALLERTON LI...</td><td>BX</td><td>Public Library...</td><td>2740 Barnes ...</td><td>10467</td><td>1</td></tr>
        <tr><th>6</th><td>BAYCHESTER...</td><td>BX</td><td>Public Library...</td><td>2049 Asch Lo...</td><td>10475</td><td>1</td></tr>
        <tr><th>7</th><td>BRONX LIBR...</td><td>BX</td><td>Public Library...</td><td>310 E Kingsbr...</td><td>10458</td><td>1</td></tr>
        <tr><th>8</th><td>CASTLE HILL...</td><td>BX</td><td>Public Library...</td><td>947 Castle Hi...</td><td>10473</td><td>1</td></tr>
        <tr><th>9</th><td>CITY ISLAND ...</td><td>BX</td><td>Public Library...</td><td>320 City Islan...</td><td>10464</td><td>1</td></tr>
        <tr><th>10</th><td>CLASON'S P...</td><td>BX</td><td>Public Library...</td><td>1215 Morriso...</td><td>10472</td><td>1</td></tr>
        <tr><th>11</th><td>EASTCHEST...</td><td>BX</td><td>Public Library...</td><td>1385 E Gunhil...</td><td>10469</td><td>1</td></tr>
        <tr><th>12</th><td>EDENWALD L...</td><td>BX</td><td>Public Library...</td><td>1255 E 233 St</td><td>10466</td><td>1</td></tr>
        <tr><th>13</th><td>FRANCIS MA...</td><td>BX</td><td>Public Library...</td><td>2150 Universi...</td><td>10453</td><td>1</td></tr>
        <tr><th>14</th><td>GRAND CON...</td><td>BX</td><td>Public Library...</td><td>155 E 173 St</td><td>10457</td><td>1</td></tr>
        <tr><th>15</th><td>HIGH BRIDGE...</td><td>BX</td><td>Public Library...</td><td>78 W 168 St</td><td>10452</td><td>1</td></tr>
        <tr><th>16</th><td>JEROME PAR...</td><td>BX</td><td>Public Library...</td><td>118 Eames Pl</td><td>10468</td><td>1</td></tr>
        <tr><th>17</th><td>KINGSBRIDG...</td><td>BX</td><td>Public Library...</td><td>291 W 231 St</td><td>10463</td><td>1</td></tr>
        </tbody>
      </table>
    </div>
    <div class="scrollbar"><span class="step up"><i></i></span><span class="thumb"></span><span class="trough"></span><span class="step down"><i></i></span></div>
  </div>
  <footer class="status">
    <button class="filter-button"><svg class="icon-s" viewBox="0 0 24 24"><use href="#funnel"/></svg><span>Show All Features</span><i class="tiny-arrow"></i></button>
    <div class="view-switch">
      <svg class="icon-s" viewBox="0 0 24 24"><path d="M2.500 2.500h19v19h-19z" fill="#e9e9e9" stroke="#6a98d2" stroke-width="1.200"/><path d="M5 8h4M5 15.800h4" stroke="#3d5879" stroke-width="2"/><path d="M10.500 5.500h8v5h-8zM10.500 13.300h8v5h-8z" fill="#fff" stroke="#6a98d2" stroke-width="1.200"/></svg>
      <span class="pressed"><svg class="icon-s" viewBox="0 0 24 24"><path d="M2.500 2.500h19v19h-19z" fill="#edf1f6" stroke="#5b8fd0" stroke-width="1.200"/><path d="M2.500 2.500h19v5.300h-19z" fill="#a9cde8" stroke="#5b8fd0" stroke-width="1.200"/><path d="M5 5.200h4.500M11 5.200h8" stroke="#5b8fd0" stroke-width="2"/><path d="M5 9.800h4.500M5 12.500h4.500M5 15.500h4.500M5 18.400h4.500M11 9.800h8M11 12.500h8M11 15.500h8M11 18.400h8" stroke="#5b8fd0" stroke-width="1.100"/></svg></span>
    </div>
  </footer>
</div>
<div class="highlight-ring"></div>
</body>
</html>
```
FILE: styles.css
```css
* { box-sizing: border-box; }
body {
  margin: 0;
  width: 2878px;
  height: 1550px;
  overflow: hidden;
  position: relative;
  display: flex;
  flex-direction: column;
  background: #ececec;
  color: #262626;
  font-family: Inter, "Liberation Sans", sans-serif;
  font-size: 22px;
}
i { display: block; font-style: normal; }
svg { display: block; flex: none; }
.defs { position: absolute; }

.icon { width: 48px; height: 48px; overflow: visible; }
.icon-s { width: 32px; height: 32px; overflow: visible; }
.off { opacity: .36; filter: saturate(.45); }
.gray { filter: saturate(.12); }
.flip { transform: scaleX(-1); filter: grayscale(1); }
.tag-text { font: bold 7.8px "Open Sans", sans-serif; letter-spacing: -.3px; fill: #333; }
.help-text { font: 18px "Liberation Serif", serif; fill: #fff; text-anchor: middle; }
.arrow {
  flex: none;
  width: 16px;
  height: 9px;
  background: #555;
  clip-path: polygon(0 0, 100% 0, 50% 100%);
}
.tool { position: relative; }
.tiny-arrow {
  width: 12px;
  height: 6px;
  background: #4f4f4f;
  clip-path: polygon(0 0, 100% 0, 50% 100%);
}
.tool .tiny-arrow { position: absolute; right: -4px; bottom: -1px; }
.grip {
  flex: none;
  width: 8px;
  height: 34px;
  background: radial-gradient(circle at 1px 1px, #b4b4b4 1.2px, transparent 1.6px) 0 0 / 6px 6px;
}
.grip.wide { width: 34px; height: 8px; }

.main-toolbar {
  flex: none;
  display: flex;
  height: 77px;
  background: linear-gradient(#e9e9e9, #f6f6f6 2px, #f3f3f3 30px, #e8e8e8 75px);
  border-bottom: 2px solid #b0b1b0;
}
.group { display: flex; align-items: center; gap: 18px; padding: 0 16px 0 10px; }
.group .grip { margin-right: -2px; }
.group.first { padding-left: 8px; }
.edit .arrow { margin: 0 -7px 0 -7px; }
.edit .arrow + .icon { margin-left: 4px; }

.workspace { flex: 1; display: flex; min-height: 0; }
.source-toolbar {
  width: 101px;
  display: flex;
  flex-direction: column;
  gap: 16px;
  padding: 10px 0 0 14px;
  background: linear-gradient(90deg, #f5f5f5, #e9e9e9);
  border-right: 2px solid #b3b3b3;
}
.source-toolbar .grip { margin: 0 0 -1px 22px; }
.source { display: flex; align-items: center; gap: 12px; height: 48px; }

.layers-panel { width: 712px; display: flex; flex-direction: column; background: #ececec; }
.panel-title { margin: 7px 0 0 10px; font-size: 22px; line-height: 27px; font-weight: 400; letter-spacing: -.1px; }
.panel-tools { display: flex; align-items: center; gap: 18px; padding: 19px 0 15px 17px; }
.panel-tools .arrow { margin: 0 -4px 0 -6px; }
.tree {
  flex: 1;
  margin: 0 0 0 1px;
  padding: 1px 0 0 1px;
  list-style: none;
  background: #fff;
  border: solid #b5b5b5;
  border-width: 1px 1px 0 1px;
}
.layer { display: flex; align-items: center; height: 36px; padding-left: 46px; }
.layer.current { background: #dcdcdc; color: #000; }
.check { width: 28px; height: 28px; border: 2px solid #b8b8b8; background: #fff; margin-right: 12px; }
.swatch { width: 32px; display: flex; justify-content: center; margin-right: 12px; }
.dot { width: 11px; height: 11px; border-radius: 50%; border: 2px solid #666; }
.dot.red { background: #cf6561; }
.dot.tan { background: #c0b38f; border-color: #444; }
.fill { width: 32px; height: 32px; background: #00e4ea; border: 1px solid #109aa0; }
.name { font-size: 25.500px; font-weight: 700; letter-spacing: .2px; line-height: 30px; }
.current .name { text-decoration: underline; text-decoration-thickness: 3px; text-underline-offset: 3px; text-decoration-skip-ink: none; }

.splitter { width: 15px; background: #e8e8e8; border-right: 1px solid #b5b5b5; }
.map-canvas {
  flex: 1;
  position: relative;
  overflow: hidden;
  margin: 1px 1px 0 0;
  background: #fff;
  border: solid #b5b5b5;
  border-width: 1px 1px 0 0;
}
.map { position: absolute; left: 252px; top: 1100px; width: 1300px; height: 370px; }
.map path { stroke: #17262a; stroke-width: 1.5px; vector-effect: non-scaling-stroke; stroke-linejoin: round; }
.map .tract { fill: #00e5ea; }
.map .selected { fill: #ecec00; }
.map .edge { fill: none; }
.school { fill: #aa9d80; stroke: #3a3a3a; stroke-width: 2px; }
.school ellipse { vector-effect: non-scaling-stroke; }

.window {
  position: absolute;
  left: 512px;
  top: 78px;
  width: 2109px;
  height: 1184px;
  display: flex;
  flex-direction: column;
  background: #ebebeb;
  border-radius: 10px;
  overflow: hidden;
  box-shadow: 0 0 0 1px rgba(0, 0, 0, .25), 0 24px 70px rgba(0, 0, 0, .46);
}
.titlebar {
  flex: none;
  height: 44px;
  position: relative;
  display: flex;
  align-items: center;
  justify-content: center;
  background: linear-gradient(#f2f2f2, #e3e3e3 2px, #cdcdcd);
  border-bottom: 1px solid #a9a9a9;
}
.titlebar h1 { margin: 2px 0 0; font-size: 25.300px; letter-spacing: .14px; line-height: 32px; font-weight: 400; color: #454545; }
.lights { position: absolute; left: 16px; top: 10px; display: flex; gap: 16px; }
.lights i { width: 24px; height: 24px; border-radius: 50%; background: #8e8d91; border: 1px solid #77767a; }
.table-tools { flex: none; display: flex; align-items: center; gap: 18px; height: 62px; padding: 0 16px 2px; }
.sep { width: 2px; height: 22px; background: #fff; border-left: 1px solid #d2d2d2; margin: 0 -4px 0 -2px; }
.pressed {
  display: flex;
  align-items: center;
  justify-content: center;
  width: 48px;
  height: 46px;
  border: 2px solid #a5a5a5;
  border-radius: 6px;
  background: #d8d8d8;
}
.table-tools .pressed { margin: 0 -8px; }

.table-area { flex: 1; min-height: 0; display: flex; border: 1px solid #b2b2b2; border-width: 1px 1px 1px 0; margin-right: 2px; }
.table-view { flex: 1; overflow: hidden; background: linear-gradient(#ebebeb 34px, #fff 34px); padding: 1px 0 0 1px; }
table { width: 1238px; table-layout: fixed; border-collapse: separate; border-spacing: 0; }
col.num { width: 38px; }
col { width: 200px; }
th { font-weight: 400; padding: 0; }
thead th {
  height: 33px;
  line-height: 28px;
  padding: 1px 0 0 2px;
  background: linear-gradient(#fafafa, #f0f0f0);
  border-right: 2px solid #c6c6c6;
  border-bottom: 2px solid #a9a9a9;
  font-size: 21.500px;
  letter-spacing: .1px;
}
thead .corner { border-right: 0; }
thead th:last-child { border-right-color: #f0f0f0; }
tbody tr { height: 60px; }
tbody th {
  height: 60px;
  padding: 3px 0 0 5px;
  text-align: left;
  font-size: 21px;
  background: linear-gradient(90deg, #fafafa, #ededed);
  border-right: 2px solid #b0b0b0;
  border-bottom: 2px solid #b0b0b0;
}
td {
  height: 60px;
  padding: 0 0 1px 7px;
  white-space: nowrap;
  overflow: hidden;
  font-size: 25px;
  font-variant-numeric: tabular-nums;
  color: #000;
  border-right: 1px solid #c4c4c4;
  border-bottom: 1px solid #c4c4c4;
}
td:nth-child(4) { letter-spacing: -.1px; }
tbody tr:nth-child(even) td { background: #f4f6f5; }
tbody tr.sel td { background: #e0e0e0; box-shadow: inset 1px 1px #f7f7f7; }
td:last-child { text-align: right; padding-right: 6px; font-variant-numeric: normal; }

.scrollbar { width: 28px; display: flex; flex-direction: column; border-left: 1px solid #b8b8b8; background: linear-gradient(90deg, #fff, #efefef); }
.step { height: 27px; display: flex; align-items: center; justify-content: center; }
.step i { width: 16px; height: 8px; background: #555; }
.up { border-bottom: 2px solid #bbb; }
.up i { clip-path: polygon(50% 0, 100% 100%, 0 100%); }
.down i { clip-path: polygon(0 0, 100% 0, 50% 100%); }
.thumb { height: 442px; border-bottom: 2px solid #bbb; }
.trough { flex: 1; background: #e3e3e3; border-bottom: 2px solid #bbb; }

.status { flex: none; height: 54px; display: flex; justify-content: space-between; align-items: flex-start; padding: 1px 7px 0 6px; }
.filter-button {
  display: flex;
  align-items: center;
  gap: 5px;
  width: 238px;
  height: 46px;
  padding: 0 0 0 4px;
  border: 2px solid #a9a9a9;
  border-radius: 6px;
  background: linear-gradient(#fcfcfc, #ededed);
  color: #262626;
  font: 20.500px Inter, sans-serif;
  letter-spacing: -.25px;
  white-space: nowrap;
  position: relative;
}
.filter-button .tiny-arrow { position: absolute; right: 2px; bottom: 6px; }
.view-switch { display: flex; align-items: center; gap: 8px; }

.highlight-ring {
  position: absolute;
  left: 1211px;
  top: 95px;
  width: 119px;
  height: 119px;
  border: 6px solid #f0f;
  border-radius: 50%;
}
```
